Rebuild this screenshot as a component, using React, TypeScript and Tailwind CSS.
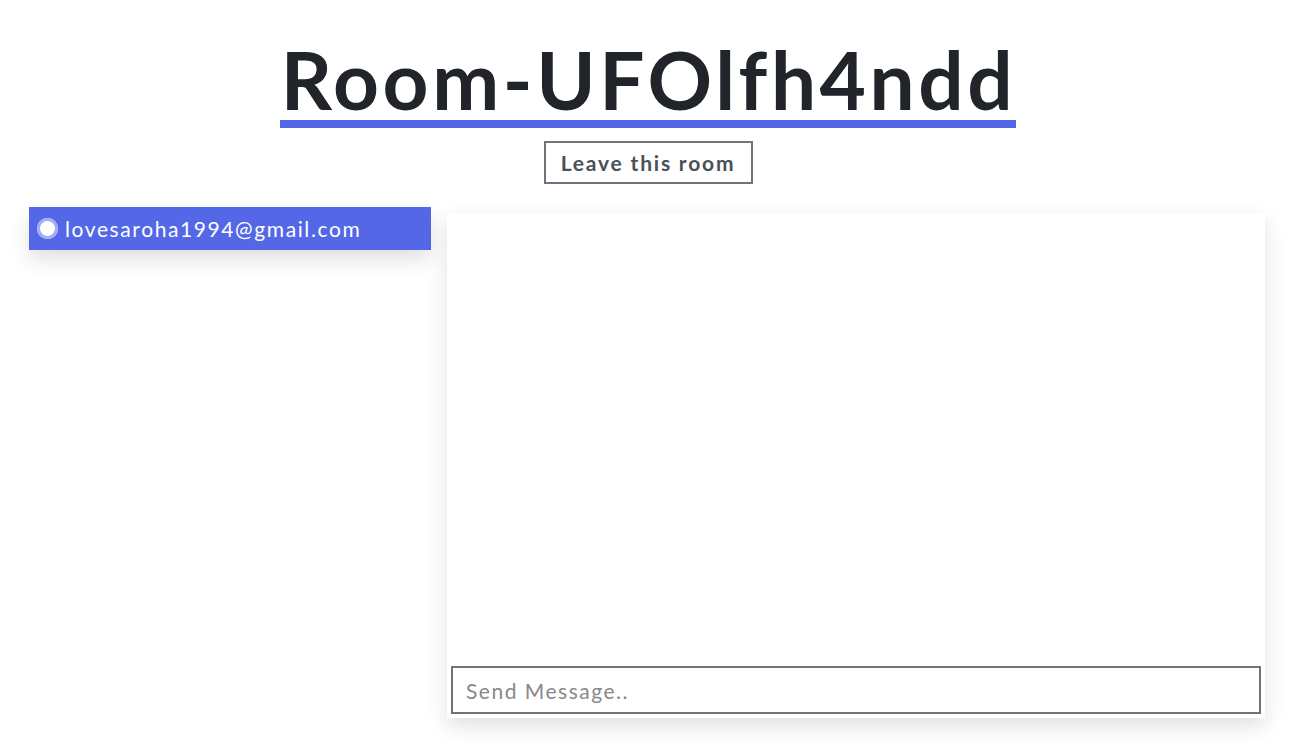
import React from "react";

export default function App() {
  return (
    <div className="min-h-[756px] w-full bg-white" style={{ fontFamily: "Lato, 'Noto Sans', sans-serif" }}>
      <div className="flex flex-col items-center pt-[38px]">
        <h1 className="border-b-[8px] border-[#5468e7] pl-[1px] pr-[0px] text-[80px] font-bold leading-[82px] tracking-[3.6px] text-[#212529]">
          Room-UFOlfh4ndd
        </h1>
        <button className="mt-[13px] h-[43px] w-[209px] border-2 border-[#6c757d] text-[21px] font-bold tracking-[1.8px] text-[#495057]">
          Leave this room
        </button>
      </div>
      <div className="mt-[23px] flex gap-[16px] pl-[29px] pr-[31px]">
        <div className="w-[402px] shrink-0">
          <div className="flex h-[43px] items-center gap-[7px] bg-[#5468e7] pl-[8px] text-[21px] tracking-[1.6px] text-white shadow-[0_10px_20px_rgba(0,0,0,0.12)]">
            <span className="h-[21px] w-[21px] shrink-0 rounded-full bg-white ring-[3px] ring-inset ring-[#a3adf2]"></span>
            <span>lovesaroha1994@gmail.com</span>
          </div>
        </div>
        <div className="mt-[6px] flex h-[505px] flex-1 flex-col justify-end bg-white p-[4px] shadow-[0_8px_20px_rgba(0,0,0,0.12)]">
          <input
            placeholder="Send Message.."
            className="h-[48px] w-full border-2 border-[#6c757d] px-[13px] text-[21px] tracking-[1.5px] text-[#495057] outline-none placeholder:text-[#888]"
          />
        </div>
      </div>
    </div>
  );
}
